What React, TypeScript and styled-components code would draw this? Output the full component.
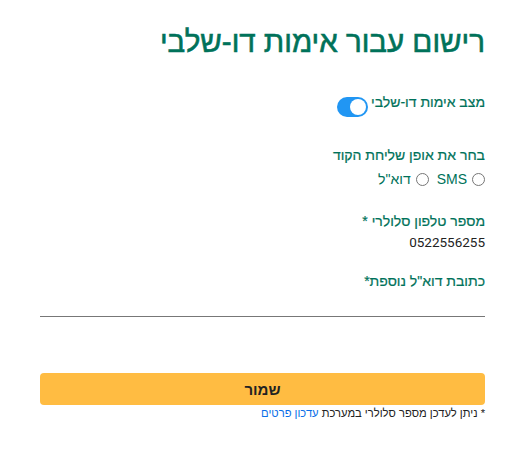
import React, { useState } from "react";
import styled, { createGlobalStyle } from "styled-components";

const Global = createGlobalStyle`
  html, body { margin: 0; padding: 0; background: #fff; }
  body { font-family: "Liberation Sans", Arial, sans-serif; }
  * { box-sizing: border-box; }
`;

const Page = styled.div`
  direction: rtl;
  padding: 24px 42px 0 40px;
  width: 527px;
`;

const Title = styled.h1`
  margin: 0 0 32px;
  font-size: 29.5px;
  font-weight: 400;
  -webkit-text-stroke: 0.6px #00725a;
  color: #00725a;
  line-height: 36px;
`;

const Label = styled.div`
  font-size: 14px;
  color: #00725a;
  -webkit-text-stroke: 0.2px #00725a;
  line-height: 20px;
`;

const ToggleRow = styled.div`
  display: flex;
  align-items: flex-start;
  gap: 3px;
  margin-bottom: 28px;
`;

const Switch = styled.button<{ $on: boolean }>`
  position: relative;
  width: 31px;
  height: 20px;
  border-radius: 10px;
  border: none;
  padding: 0;
  background: ${(p) => (p.$on ? "#2196f3" : "#ccc")};
  cursor: pointer;
  margin-top: 5px;
  &::after {
    content: "";
    position: absolute;
    top: 2px;
    ${(p) => (p.$on ? "left: 13px;" : "left: 2px;")}
    width: 16px;
    height: 16px;
    border-radius: 50%;
    background: #fff;
  }
`;

const Section = styled.div<{ $mb: number }>`
  margin-bottom: ${(p) => p.$mb}px;
`;

const RadioRow = styled.div`
  display: flex;
  align-items: center;
  gap: 8px;
  margin-top: 4px;
  height: 20px;
`;

const RadioLabel = styled.label`
  display: flex;
  align-items: center;
  gap: 5px;
  font-size: 14px;
  color: #00725a;
  cursor: pointer;
`;

const Radio = styled.input`
  margin: 0;
  width: 13px;
  height: 13px;
`;

const Value = styled.div`
  font-family: Roboto, "Liberation Sans", sans-serif;
  font-size: 13.5px;
  color: #222;
  line-height: 20px;
  margin-top: 1px;
`;

const Underline = styled.input`
  display: block;
  width: 100%;
  border: none;
  border-bottom: 1.5px solid #777;
  height: 26px;
  margin: 0;
  padding: 0;
  outline: none;
  background: transparent;
  font-size: 14px;
`;

const SaveButton = styled.button`
  display: block;
  width: 100%;
  height: 32px;
  margin-top: 56px;
  border: none;
  border-radius: 4px;
  background: #ffbc42;
  font-family: inherit;
  font-size: 15px;
  font-weight: 700;
  color: #222;
  cursor: pointer;
`;

const Note = styled.div`
  font-size: 11.2px;
  color: #222;
  line-height: 16px;
`;

const Link = styled.a`
  color: #0a6ee8;
  text-decoration: none;
`;

export default function App() {
  const [on, setOn] = useState(true);
  const [method, setMethod] = useState("");
  return (
    <>
      <Global />
      <Page>
        <Title>רישום עבור אימות דו-שלבי</Title>
        <ToggleRow>
          <Label>מצב אימות דו-שלבי</Label>
          <Switch $on={on} onClick={() => setOn(!on)} aria-label="toggle" />
        </ToggleRow>
        <Section $mb={22}>
          <Label>בחר את אופן שליחת הקוד</Label>
          <RadioRow>
            <RadioLabel>
              <Radio type="radio" name="m" checked={method === "sms"} onChange={() => setMethod("sms")} />
              SMS
            </RadioLabel>
            <RadioLabel>
              <Radio type="radio" name="m" checked={method === "mail"} onChange={() => setMethod("mail")} />
              דוא"ל
            </RadioLabel>
          </RadioRow>
        </Section>
        <Section $mb={19}>
          <Label>מספר טלפון סלולרי *</Label>
          <Value>0522556255</Value>
        </Section>
        <Section $mb={0}>
          <Label>כתובת דוא"ל נוספת*</Label>
          <Underline type="text" />
        </Section>
        <SaveButton>שמור</SaveButton>
        <Note>
          * ניתן לעדכן מספר סלולרי במערכת <Link href="#">עדכון פרטים</Link>
        </Note>
      </Page>
    </>
  );
}
